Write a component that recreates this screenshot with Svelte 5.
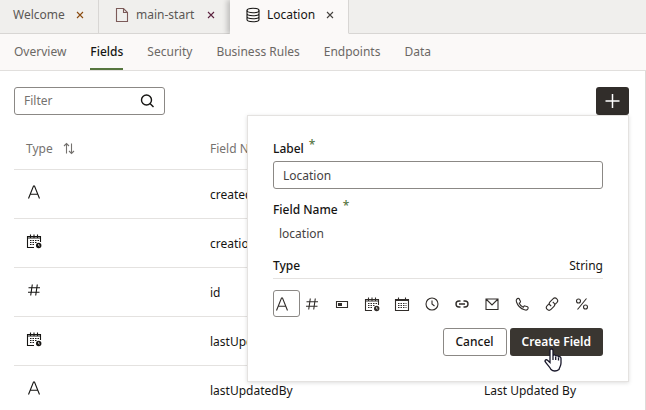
<script>
  const sections = ['Overview', 'Fields', 'Security', 'Business Rules', 'Endpoints', 'Data'];
  const rows = [
    { type: 'string', name: 'createdBy', label: 'Created By' },
    { type: 'datetime', name: 'creationDate', label: 'Creation Date' },
    { type: 'number', name: 'id', label: 'Id' },
    { type: 'datetime', name: 'lastUpdateDate', label: 'Last Update Date' },
    { type: 'string', name: 'lastUpdatedBy', label: 'Last Updated By' }
  ];
  const types = [
    ['string', 'String'], ['number', 'Number'], ['boolean', 'Boolean'], ['datetime', 'Date Time'],
    ['date', 'Date'], ['time', 'Time'], ['reference', 'Reference'], ['email', 'Email'],
    ['phone', 'Phone'], ['url', 'URL'], ['percent', 'Percentage']
  ];
  let filter = $state('');
  let label = $state('Location');
  let selected = $state('string');
  let typeName = $derived(types.find((t) => t[0] === selected)[1]);
</script>

{#snippet icon(name)}
  <svg class="icon" viewBox="0 0 16 16" width="16" height="16" aria-hidden="true">
    {#if name === 'string'}
      <path d="M2.5 14.5 7.5 2h1l5 12.5M4.2 10.2h7.6" />
    {:else if name === 'number'}
      <path d="M6.3 2.5 4.7 13.5M11.3 2.5 9.7 13.5M2.5 5.8h11.5M2 10.2h11.5" />
    {:else if name === 'boolean'}
      <path d="M2.5 5.5h11v6h-11z" /><path class="solid" d="M4 7h4v3H4z" />
    {:else if name === 'datetime'}
      <path d="M8 14.5H1.5v-11h13V9M1.5 5h13M4.5 1.5V5M8 1.5V5M11.5 1.5V5" />
      <path stroke-dasharray="1.5 1" d="M4 7.5h9M4 9.5h7M4 11.5h5" />
      <circle class="solid" cx="12.7" cy="12.5" r="2.7" /><path class="light" d="M12.7 11v1.7l1 .5" />
    {:else if name === 'date'}
      <path d="M1.5 3.5h13v11h-13zM1.5 4.5h13M4.5 1.5V5M11.5 1.5V5" />
      <path stroke-dasharray="1.5 1" d="M4 7.5h8.5M4 9.5h8.5M4 11.5h8.5" />
    {:else if name === 'time'}
      <circle cx="8" cy="8" r="6" /><path d="M8 4.5V8l2.5 2" />
    {:else if name === 'reference'}
      <path stroke-width="1.4" d="M6.5 5H5a3 3 0 0 0 0 6h1.5M9.5 5H11a3 3 0 0 1 0 6H9.5M5 8h6" />
    {:else if name === 'email'}
      <path d="M2 3h12v10.5H2zM2 3l6 6 6-6" />
    {:else if name === 'phone'}
      <path d="M2.5 3.500Q3.500 2 5 2.500l1.500 3Q6.500 6.500 5.200 7.200 6.500 10 9.200 11.200L10.300 9.800l3.200 1q1 .5.5 2-1 2-3.500 1Q4.500 12 2.500 6 2 4.500 2.500 3.500z" />
    {:else if name === 'url'}
      <path d="M7.200 10.200 6 9a2.300 2.300 0 0 1 0-3.200l3-3a2.500 2.500 0 0 1 3.800 3.800L11 8.300M8.800 6l1.200 1.200a2.300 2.300 0 0 1 0 3.200l-3 3a2.500 2.500 0 0 1-3.800-3.800L5 7.800" />
    {:else if name === 'percent'}
      <circle cx="4.5" cy="5" r="2" /><circle cx="11.5" cy="11" r="2" /><path d="M12.5 2.5 3.5 13.5" />
    {:else if name === 'search'}
      <circle cx="7.500" cy="7" r="5" stroke-width="1.400" /><path stroke-width="1.400" d="m11 10.500 3.500 3.500" />
    {:else if name === 'plus'}
      <path stroke-width="1.500" d="M7.500 1v14M.5 8h14" />
    {:else if name === 'page'}
      <path d="M2.500 1.500h7l4 4v9h-11zM9.500 1.500v4h4" />
    {:else if name === 'database'}
      <ellipse cx="8" cy="3.500" rx="6" ry="2.200" /><path d="M2 3.500v9c0 3 12 3 12 0v-9M2 6.500c0 3 12 3 12 0M2 9.500c0 3 12 3 12 0" />
    {:else if name === 'sort'}
      <path d="M5.500 12.500V2.500M3 5l2.500-2.500L8 5M10.500 2.500v10M8 10l2.500 2.500L13 10" />
    {/if}
  </svg>
{/snippet}

{#snippet close(tab)}
  <button class="close" aria-label="Close {tab}">
    <svg viewBox="0 0 8 8" width="8" height="8" aria-hidden="true"><path d="m1 1 6 6M7 1 1 7" /></svg>
  </button>
{/snippet}

<div class="app">
  <div class="tabs">
    <div class="tab welcome"><a href="#welcome">Welcome</a>{@render close('Welcome')}</div>
    <div class="tab page"><a href="#main-start">{@render icon('page')}main-start</a>{@render close('main-start')}</div>
    <div class="tab current"><a href="#location">{@render icon('database')}Location</a>{@render close('Location')}</div>
    <div class="rest"></div>
  </div>
  <nav>
    {#each sections as section}
      <a href="#{section}" class:active={section === 'Fields'}>{section}</a>
    {/each}
  </nav>
  <main>
    <div class="toolbar">
      <div class="search">
        <input type="text" placeholder="Filter" aria-label="Filter" bind:value={filter} />
        {@render icon('search')}
      </div>
      <div class="add">
        <button class="plus" aria-label="New field">{@render icon('plus')}</button>
        <form class="popup" onsubmit={(e) => e.preventDefault()}>
          <label class="caption" for="label">Label<span>*</span></label>
          <input id="label" type="text" bind:value={label} />
          <div class="caption">Field Name<span>*</span></div>
          <output>location</output>
          <div class="typeline"><strong>Type</strong><span>{typeName}</span></div>
          <div class="types" role="radiogroup" aria-label="Type">
            {#each types as [key, title]}
              <label class="type" class:chosen={selected === key}>
                <input type="radio" name="type" value={key} aria-label={title} bind:group={selected} />
                {@render icon(key)}
              </label>
            {/each}
          </div>
          <div class="actions">
            <button type="button" class="cancel">Cancel</button>
            <button type="submit" class="create">Create Field
              <svg class="pointer" viewBox="0 0 18 24" width="18" height="24" aria-hidden="true">
                <path d="M6 14.500V2.500C6 .5 9 .5 9 2.500V8C9 6.500 11.700 6.500 11.700 8.500 12 7 14.500 7.300 14.500 9.300 15 8 17 8.500 17 10.500V15c0 3-1.500 4-2 6.500C12.500 23.500 9 23.500 7 21.500 6 19 3 16.500 1.200 13.700.5 12 2.500 11.200 3.500 12.200z" />
                <path d="M9 8v4M11.700 9v3M14.500 9.500V12.500" />
              </svg>
            </button>
          </div>
        </form>
      </div>
    </div>
    <table>
      <colgroup><col class="c1" /><col class="c2" /><col /></colgroup>
      <thead>
        <tr><th><span class="sortable">Type {@render icon('sort')}</span></th><th>Field Name</th><th>Label</th></tr>
      </thead>
      <tbody>
        {#each rows as row}
          <tr><td>{@render icon(row.type)}</td><td>{row.name}</td><td>{row.label}</td></tr>
        {/each}
      </tbody>
    </table>
  </main>
</div>

<style>
  :global(body) { margin: 0; }
  .app {
    height: 100vh; display: flex; flex-direction: column; overflow: hidden;
    font: 12px/16px "Noto Sans", "Open Sans", sans-serif; color: #161513; background: #fff;
  }
  .app * { box-sizing: border-box; }
  input, button { font: inherit; color: inherit; margin: 0; }
  a { color: inherit; text-decoration: none; }
  .icon { display: block; flex: none; fill: none; stroke: currentColor; stroke-width: 1.1; }
  .solid { fill: currentColor; stroke: none; }
  .light { stroke: #fff; stroke-width: 0.8; }

  .tabs { display: flex; flex: none; height: 34px; background: #f0efed; color: #5b5855; }
  .tab {
    display: flex; align-items: center; justify-content: space-between; padding: 0 14px 3px 13px;
    border-right: 1px solid #d8d6d4; border-bottom: 1px solid #d8d6d4;
  }
  .tab a { display: flex; align-items: center; gap: 6px; }
  .welcome { width: 99px; }
  .page { width: 131px; padding-left: 15px; border-right-color: #f0efed; }
  .page .icon { color: #7c5a59; }
  .page .close { color: #5c2340; }
  .current {
    width: 119px; padding-left: 15px; background: #fbf9f8; color: #161513;
    border-bottom-color: #fbf9f8; box-shadow: -3px 0 5px #0003; clip-path: inset(0 0 0 -8px);
  }
  .welcome .close { color: #8a4b10; }
  .current .close { color: #45423f; }
  .rest { flex: 1; border-bottom: 1px solid #d8d6d4; }
  .close { display: block; padding: 0; border: 0; background: none; }
  .close svg { display: block; fill: none; stroke: currentColor; stroke-width: 1.1; }

  nav {
    display: flex; gap: 24px; flex: none; height: 37px; padding: 0 14px;
    background: #fbf9f8; color: #6b6865; border-bottom: 1px solid #e1dfdd;
  }
  nav a { padding-top: 10px; border-bottom: 2px solid transparent; white-space: nowrap; }
  nav .active { color: #161513; border-color: #56763f; font-weight: 500; }

  main { flex: 1; min-height: 0; padding: 16px 16px 0 14px; border-right: 1px solid #dddbd9; }
  .toolbar { display: flex; justify-content: space-between; height: 28px; }
  .search {
    display: flex; align-items: center; width: 151px; padding: 0 9px;
    border: 1px solid #8b8885; border-radius: 3px;
  }
  .search input { flex: 1; min-width: 0; padding: 0; border: 0; outline: 0; background: none; }
  .search input::placeholder { color: #75726f; opacity: 1; }
  .add { position: relative; }
  .plus {
    display: flex; align-items: center; justify-content: center; width: 33px; height: 28px;
    padding: 0; border: 0; border-radius: 3px; background: #312d2a; color: #fff;
  }

  .popup {
    position: absolute; z-index: 1; top: 28px; right: 0; width: 382px; padding: 25px;
    background: #fff; border: 1px solid #e4e2e0; box-shadow: 0 1px 4px #0002;
  }
  .caption { display: flex; font-weight: 500; }
  .caption span { padding-left: 5px; line-height: 8px; color: #56763f; }
  #label {
    display: block; width: 100%; height: 28px; margin: 4px 0 13px; padding: 0 9px;
    border: 1px solid #8b8885; border-radius: 3px; outline: 0; color: #45423f;
  }
  output { display: block; padding: 8px 6px; color: #45423f; }
  .typeline {
    display: flex; justify-content: space-between; margin-bottom: 11px; padding: 8px 0 4px;
    border-bottom: 1px solid #e4e2e0;
  }
  .typeline strong { font-weight: 500; }
  .types { display: flex; gap: 3px; }
  .type { display: flex; align-items: center; width: 27px; height: 27px; border: 1px solid transparent; border-radius: 3px; color: #312d2a; }
  .type input { appearance: none; position: absolute; }
  .chosen { border-color: #8b8885; }
  .actions { display: flex; justify-content: flex-end; gap: 3px; margin-top: 11px; }
  .actions button { height: 28px; padding: 0 12px; border-radius: 3px; font-weight: 500; white-space: nowrap; }
  .cancel { border: 1px solid #8b8885; background: #fff; }
  .actions .create { position: relative; border: 0; background: #3a3631; color: #fff; font-weight: 600; }
  .pointer { position: absolute; left: 34px; top: 20px; fill: #fff; stroke: #171629; stroke-width: 1.3; }

  table { width: 100%; margin-top: 15px; border-collapse: collapse; table-layout: fixed; }
  .c1 { width: 184px; }
  .c2 { width: 274px; }
  tr { border-bottom: 1px solid #e4e2e0; }
  th { height: 39px; padding: 0 12px; text-align: left; font-weight: 400; color: #75726f; }
  td { height: 49px; padding: 2px 12px 0; }
  td .icon { margin-bottom: 6px; }
  .sortable { display: flex; align-items: center; gap: 8px; }
</style>
